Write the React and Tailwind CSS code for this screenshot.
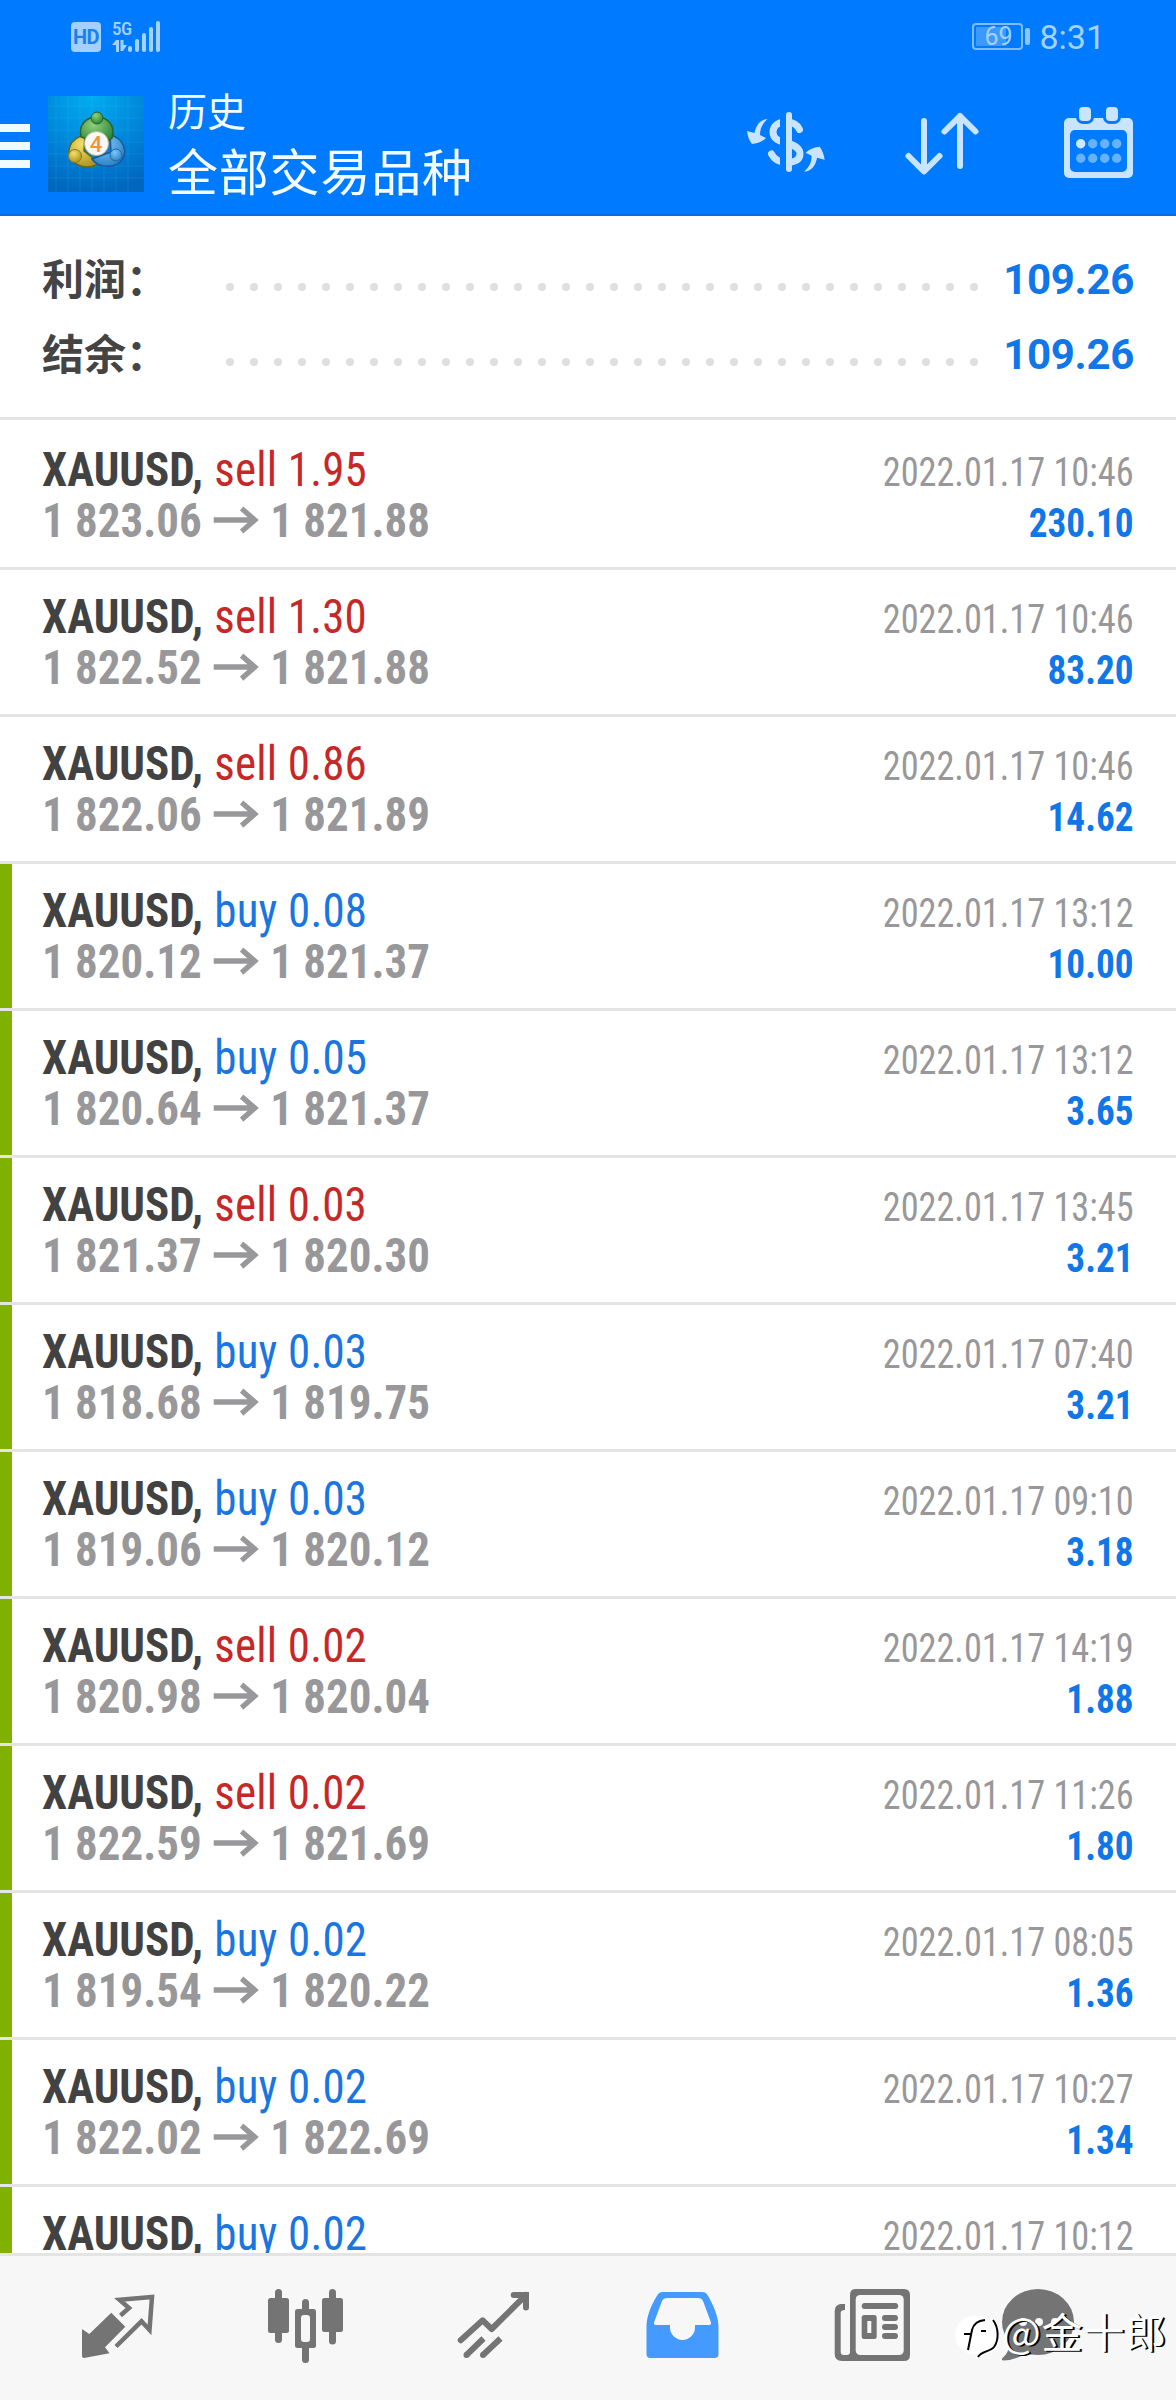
import React from 'react';

const trades = [
  { type: 'sell', volume: '1.95', open: '1 823.06', close: '1 821.88', time: '2022.01.17 10:46', profit: '230.10' },
  { type: 'sell', volume: '1.30', open: '1 822.52', close: '1 821.88', time: '2022.01.17 10:46', profit: '83.20' },
  { type: 'sell', volume: '0.86', open: '1 822.06', close: '1 821.89', time: '2022.01.17 10:46', profit: '14.62' },
  { type: 'buy', volume: '0.08', open: '1 820.12', close: '1 821.37', time: '2022.01.17 13:12', profit: '10.00', tp: true },
  { type: 'buy', volume: '0.05', open: '1 820.64', close: '1 821.37', time: '2022.01.17 13:12', profit: '3.65', tp: true },
  { type: 'sell', volume: '0.03', open: '1 821.37', close: '1 820.30', time: '2022.01.17 13:45', profit: '3.21', tp: true },
  { type: 'buy', volume: '0.03', open: '1 818.68', close: '1 819.75', time: '2022.01.17 07:40', profit: '3.21', tp: true },
  { type: 'buy', volume: '0.03', open: '1 819.06', close: '1 820.12', time: '2022.01.17 09:10', profit: '3.18', tp: true },
  { type: 'sell', volume: '0.02', open: '1 820.98', close: '1 820.04', time: '2022.01.17 14:19', profit: '1.88', tp: true },
  { type: 'sell', volume: '0.02', open: '1 822.59', close: '1 821.69', time: '2022.01.17 11:26', profit: '1.80', tp: true },
  { type: 'buy', volume: '0.02', open: '1 819.54', close: '1 820.22', time: '2022.01.17 08:05', profit: '1.36', tp: true },
  { type: 'buy', volume: '0.02', open: '1 822.02', close: '1 822.69', time: '2022.01.17 10:27', profit: '1.34', tp: true },
  { type: 'buy', volume: '0.02', open: '', close: '', time: '2022.01.17 10:12', profit: '', tp: true },
];

const StatusBar = () => (
  <div className="flex h-[72px] items-start justify-between pl-[71px] pr-[71px] text-[#a3d2ff]">
    <div className="flex items-start pt-[22px]">
      <div className="flex h-[30px] w-[30px] items-center justify-center rounded-[4px] bg-[#a3d0ff] font-['Roboto',sans-serif] text-[20px] leading-none font-bold tracking-tight text-[#1a80f0]">
        HD
      </div>
      <div className="ml-[11px] -mt-[3px] w-[16px]">
        <div className="font-['Roboto_Condensed',sans-serif] text-[19px] leading-[20px] font-medium tracking-[-0.5px]">5G</div>
        <svg className="mt-[1px]" width="15" height="12" viewBox="0 0 15 12" fill="currentColor">
          <path d="M0 5 4 0h3v12H4V5zM8.500 0h3v5H15l-4 6H8.500z" />
        </svg>
      </div>
      <svg className="-mt-[1px]" width="33" height="31" viewBox="0 0 33 31" fill="currentColor">
        <rect x="0" y="25" width="4" height="6" rx="2" />
        <rect x="7" y="18" width="4" height="13" rx="2" />
        <rect x="14" y="12" width="4" height="19" rx="2" />
        <rect x="21" y="6" width="4" height="25" rx="2" />
        <rect x="28" y="0" width="4" height="31" rx="2" />
      </svg>
    </div>
    <div className="flex items-start pt-[23px]">
      <div className="flex h-[27px] w-[51px] items-center rounded-[4px] border-2 border-[#7dbcff] p-[2px]">
        <div className="flex h-[19px] w-[30px] items-center bg-[#3d99ff] pl-[8px] font-['Roboto',sans-serif] text-[25px] leading-none">69</div>
      </div>
      <div className="mt-[5px] ml-[2px] h-[17px] w-[5px] rounded-[2px] bg-[#8cc6ff]" />
      <span className="ml-[9px] -mt-[4px] font-['Roboto',sans-serif] text-[34px] leading-[36px]">8:31</span>
    </div>
  </div>
);

const AppLogo = () => (
  <svg width="96" height="96" viewBox="0 0 96 96">
    <defs>
      <radialGradient id="logoBg" cx="0.45" cy="0" r="1">
        <stop offset="0" stopColor="#00aef0" />
        <stop offset="0.6" stopColor="#0083d8" />
        <stop offset="1" stopColor="#0067bf" />
      </radialGradient>
      <radialGradient id="logoGreen" cx="0.4" cy="0.3" r="0.8">
        <stop offset="0" stopColor="#8fd07c" />
        <stop offset="1" stopColor="#1f7a2c" />
      </radialGradient>
      <radialGradient id="logoYellow" cx="0.4" cy="0.3" r="0.8">
        <stop offset="0" stopColor="#f2e06a" />
        <stop offset="1" stopColor="#a88c14" />
      </radialGradient>
      <radialGradient id="logoBlue" cx="0.4" cy="0.3" r="0.8">
        <stop offset="0" stopColor="#7fc8f5" />
        <stop offset="1" stopColor="#2179c2" />
      </radialGradient>
    </defs>
    <rect width="96" height="96" fill="url(#logoBg)" />
    <path d="M8 0v96M20 0v96M32 0v96M44 0v96M56 0v96M68 0v96M80 0v96M0 10h96M0 22h96M0 34h96M0 46h96M0 58h96M0 70h96M0 82h96" stroke="#5cc8f5" strokeOpacity="0.13" strokeWidth="1" />
    <path d="M37 39C21 42 17 57 25 65c7 8 20 7 26 2L36 55z" fill="url(#logoYellow)" stroke="#5d6a22" strokeWidth="1.5" />
    <path d="M62 39c14 3 19 18 10 27-8 7-23 5-28-3l19-7z" fill="url(#logoBlue)" stroke="#17599c" strokeWidth="1.5" />
    <path d="M33 41c-3-13 6-20 16-20s19 8 15 21l-7 6-8-12-10 7z" fill="url(#logoGreen)" stroke="#26622f" strokeWidth="1.5" />
    <circle cx="49" cy="22" r="6" fill="url(#logoGreen)" stroke="#26622f" />
    <circle cx="27" cy="60" r="6.500" fill="url(#logoYellow)" stroke="#8a7a1c" />
    <circle cx="68" cy="59" r="6" fill="url(#logoBlue)" stroke="#1b69ae" />
    <circle cx="48.500" cy="47.500" r="12" fill="#fbf8f4" stroke="#b9b9a4" />
    <text x="48" y="55.500" textAnchor="middle" fontFamily="Roboto" fontSize="22" fontWeight="500" fill="#f3923c">4</text>
  </svg>
);

const CurrencyIcon = () => (
  <svg width="110" height="85" viewBox="0 0 110 85">
    <path d="M64.500 29.500C62 24 57 22 51 22c-8 0-13 4-13 10 0 7 6 9 13 11 9 2 14 5 14 11s-6 8.500-13 8.500c-8 0-13-3.500-15.500-8.500" fill="none" stroke="#c9e4ff" strokeWidth="7" strokeLinecap="round" />
    <rect x="45" y="14" width="6.500" height="56" fill="#007aff" />
    <rect x="51" y="12" width="6" height="60" rx="3" fill="#c9e4ff" />
    <path d="M32.500 19C24 20 21 26 19.500 33L12 31c.5 5 2 9 5 13 5-.5 10-2 14-6l-6-3c0-6 2-11 7.500-16z" fill="#c9e4ff" />
    <path d="M32.500 19C24 20 21 26 19.500 33L12 31c.5 5 2 9 5 13 5-.5 10-2 14-6l-6-3c0-6 2-11 7.500-16z" transform="rotate(180 50.800 45.400)" fill="#c9e4ff" />
  </svg>
);

const SortIcon = () => (
  <svg width="84" height="76" viewBox="0 0 84 76" fill="none" stroke="#c9e4ff" strokeWidth="6" strokeLinecap="round" strokeLinejoin="round">
    <path d="M24 16v50M8.500 51 24 66.500 39.500 51M60 61V11M44.500 26.500 60 11l15.500 15.500" />
  </svg>
);

const CalendarIcon = () => (
  <svg width="76" height="80" viewBox="0 0 76 80" fill="#c9e4ff">
    <rect x="4" y="15" width="69" height="60" rx="5" />
    <rect x="10" y="27" width="57" height="42" rx="5" fill="#007aff" />
    <rect x="16" y="1" width="18" height="20" rx="7" fill="#007aff" />
    <rect x="43" y="1" width="18" height="20" rx="7" fill="#007aff" />
    <rect x="19" y="4" width="12" height="14" rx="4" />
    <rect x="46" y="4" width="12" height="14" rx="4" />
    {[20.7, 32.7, 44.7, 56.7].map((x, i) => (
      <g key={x} fill="#66b2ff">
        <circle cx={x} cy="40.700" r="4.700" fill={i === 0 ? '#cfe8ff' : '#66b2ff'} />
        <circle cx={x} cy="55.300" r="4.700" />
      </g>
    ))}
  </svg>
);

const Header = () => (
  <header className="h-[216px] border-b-2 border-[#0f6ad6] bg-[#007aff]">
    <StatusBar />
    <div className="flex items-start">
      <div className="mt-[52px] flex w-[30px] flex-col gap-[10px]">
        <div className="h-[8px] bg-[#f0fbff]" />
        <div className="h-[8px] bg-[#f0fbff]" />
        <div className="h-[8px] bg-[#f0fbff]" />
      </div>
      <div className="mt-[24px] ml-[18px]">
        <AppLogo />
      </div>
      <div className="ml-[24px] grow font-['Noto_Sans_CJK_SC',sans-serif] text-[#f4fcff]">
        <div className="mt-[13px] text-[39px] leading-[48px]">历史</div>
        <div className="mt-[3px] text-[50px] leading-[66px] tracking-[0.8px] whitespace-nowrap">全部交易品种</div>
      </div>
      <div className="mt-[28px] mr-[55px]">
        <CurrencyIcon />
      </div>
      <div className="mt-[33px] mr-[76px]">
        <SortIcon />
      </div>
      <div className="mt-[31px] mr-[40px]">
        <CalendarIcon />
      </div>
    </div>
  </header>
);

const SummaryLine = ({ label, value }) => (
  <div className="flex h-[75px] items-center pl-[42px] pr-[42px]">
    <span className="mb-[5px] w-[184px] font-['Noto_Sans_CJK_SC',sans-serif] text-[42px] leading-[60px] font-bold text-[#444]">{label}</span>
    <div className="mt-[14px] flex gap-[16px]">
      {Array.from({ length: 32 }).map((_, i) => (
        <div key={i} className="h-[8px] w-[8px] rounded-full bg-[#dfdfdf]" />
      ))}
    </div>
    <span className="ml-auto font-['Roboto',sans-serif] text-[42px] leading-[60px] font-bold tracking-[-0.3px] text-[#1077e8]">{value}</span>
  </div>
);

const TradeRow = ({ trade, first }) => (
  <div className={first ? 'flex h-[150px] shrink-0 border-b-[3px] border-[#e4e4e4] pt-[3px]' : 'flex h-[147px] shrink-0 border-b-[3px] border-[#e4e4e4]'}>
    <div className={trade.tp ? 'w-[12px] bg-[#80b000]' : 'w-[12px]'} />
    <div className="flex grow justify-between pr-[42px] pl-[30px] font-['Roboto_Condensed',sans-serif] leading-[51px]">
      <div className="origin-left scale-x-[0.937] pt-[21px] text-[48px] whitespace-nowrap">
        <div>
          <span className="font-bold text-[#424242]">XAUUSD,</span>{' '}
          <span className={trade.type === 'sell' ? 'ml-[1px] tracking-[0.2px] text-[#c62828]' : 'ml-[1px] tracking-[0.2px] text-[#1976e0]'}>
            {trade.type} {trade.volume}
          </span>
        </div>
        {trade.open && (
          <div className="flex items-center font-bold text-[#98989b]">
            {trade.open}
            <svg className="mx-[12px] -mt-[1px]" width="49" height="28" viewBox="0 0 49 28" fill="none" stroke="currentColor" strokeWidth="5.500">
              <path d="M0 14h44M30 2.500 44 14 30 25.500" />
            </svg>
            {trade.close}
          </div>
        )}
      </div>
      <div className="pt-[24px] text-right text-[40px] whitespace-nowrap">
        <div className="origin-right scale-x-[0.907] text-[#98989b]">{trade.time}</div>
        <div className="origin-right scale-x-[0.93] font-bold text-[#1077e8]">{trade.profit}</div>
      </div>
    </div>
  </div>
);

const QuotesIcon = () => (
  <svg width="96" height="96" viewBox="0 0 96 96">
    <path d="M41.300 35.700 55.300 49.700 35 70.300l4.500 6L14 81q-2 0-2-2V52l7.300 5z" fill="#747474" />
    <path d="M50.500 38.500 59 31l-9.500-8.300L82 20l-2.500 33-8-8.700L46 69.500" fill="none" stroke="#747474" strokeWidth="4.500" />
  </svg>
);

const ChartIcon = () => (
  <svg width="96" height="96" viewBox="0 0 96 96" fill="#747474">
    <rect x="10" y="21" width="21" height="35" rx="2.500" />
    <rect x="17" y="12" width="7" height="54" rx="3.500" />
    <rect x="44" y="22" width="7" height="64" rx="3.500" />
    <rect x="37" y="32" width="21" height="39" rx="2.500" />
    <rect x="43" y="38" width="9" height="27" rx="3" fill="#f7f7f7" />
    <rect x="64" y="21" width="21" height="34" rx="2.500" />
    <rect x="71" y="12" width="7" height="55.500" rx="3.500" />
  </svg>
);

const TradeIcon = () => (
  <svg width="96" height="96" viewBox="0 0 96 96" fill="none" stroke="#747474" strokeWidth="6">
    <path d="M14.700 63.300 36.700 43.300 45.700 52 80 18" strokeLinejoin="round" strokeLinecap="round" />
    <path d="M67.700 18H80v12.500" strokeLinecap="round" />
    <path d="M20.500 78 37.500 61.500M37 78l17.500-16.500" />
    <circle cx="20.500" cy="78" r="3" fill="#747474" stroke="none" />
    <circle cx="37" cy="78" r="3" fill="#747474" stroke="none" />
  </svg>
);

const HistoryIcon = () => (
  <svg width="96" height="96" viewBox="0 0 96 96">
    <path d="M29 15h39q4 0 5.500 3C80 29 84.500 40 84.500 50v27q0 4-4 4h-64q-4 0-4-4V50c0-10 4-21 11-32q1.500-3 5.500-3z" fill="#449aff" />
    <path d="M33 21h31q3.500 0 5 3l8 21.500q.5 2.500-2 2.500H61v2.500a12.500 12.500 0 0 1-25 0V48H22q-2.500 0-2-2.500L28 24q1.500-3 5-3z" fill="#f7f7f7" />
  </svg>
);

const NewsIcon = () => (
  <svg width="96" height="96" viewBox="0 0 96 96" fill="#747474">
    <path d="M33 12h49q6 0 6 6v60q0 6-6 6H20q-7.300 0-7.300-7V34q0-6 6-7H23v6q-4.300 0-4.300 3v39q0 3 3 3h3q3.300 0 3.300-3V18q0-6 5-6z" />
    <rect x="33.700" y="18" width="48" height="60" rx="4.500" fill="#f7f7f7" />
    <rect x="39.700" y="26" width="36.500" height="6" rx="3" />
    <rect x="39.700" y="38" width="15" height="24" rx="2.500" />
    <rect x="45.300" y="44" width="4" height="12" fill="#f7f7f7" />
    <rect x="60" y="38" width="16" height="6" rx="3" />
    <rect x="60" y="47" width="16" height="6" rx="3" />
    <rect x="60" y="56" width="16" height="6" rx="3" />
  </svg>
);

const ChatIcon = () => (
  <svg width="96" height="96" viewBox="0 0 96 96" fill="#747474">
    <ellipse cx="48" cy="45" rx="36" ry="33" />
    <path d="M19 64q1 11-6.500 17-1.500 2.500 1 2.500Q27 83 36 76z" />
    <g fill="#f7f7f7">
      <circle cx="33" cy="45" r="4" />
      <circle cx="49" cy="45" r="4" />
      <circle cx="65" cy="45" r="4" />
    </g>
  </svg>
);

const BottomNav = () => (
  <nav className="relative flex h-[147px] border-t-[3px] border-[#e4e4e4] bg-[#f7f7f7] px-6 pt-[21px]">
    {[QuotesIcon, ChartIcon, TradeIcon, HistoryIcon, NewsIcon].map((Icon, i) => (
      <div key={i} className="flex w-[188px] justify-center">
        <Icon />
      </div>
    ))}
    <div className="flex w-[148px] justify-center">
      <ChatIcon />
    </div>
    <Watermark />
  </nav>
);

const Watermark = () => (
  <div className="absolute top-[54px] left-[955px] flex items-start">
    <svg width="46" height="52" viewBox="0 0 46 52">
      <ellipse cx="20" cy="25" rx="20" ry="19.500" fill="#fff" />
      <path d="M9 24h8M13 40l4-20q2-9 13-10" fill="none" stroke="#000" strokeWidth="2" />
      <path d="M36 9c7 6 8 22 3 29-4 5-14 4-17 11" fill="none" stroke="#fff" strokeWidth="4" />
      <path d="M38 10c6 8 6 20 1 27-4 5-13 4-16 10M26 21h5" fill="none" stroke="#000" strokeWidth="2" />
    </svg>
    <span className="-mt-[5px] ml-px font-['Noto_Sans_CJK_SC',sans-serif] text-[41px] leading-[50px] tracking-[0.8px] whitespace-nowrap text-white [text-shadow:2px_1px_0_#000]">@金十郎</span>
  </div>
);

export default function App() {
  return (
    <div className="flex h-[2400px] w-[1176px] flex-col overflow-hidden bg-white">
      <Header />
      <section className="h-[204px] shrink-0 border-b-[3px] border-[#e4e4e4] pt-[26px]">
        <SummaryLine label="利润：" value="109.26" />
        <SummaryLine label="结余：" value="109.26" />
      </section>
      <main className="flex h-[1833px] flex-col overflow-hidden">
        {trades.map((trade, i) => (
          <TradeRow key={i} trade={trade} first={i === 0} />
        ))}
      </main>
      <BottomNav />
    </div>
  );
}
